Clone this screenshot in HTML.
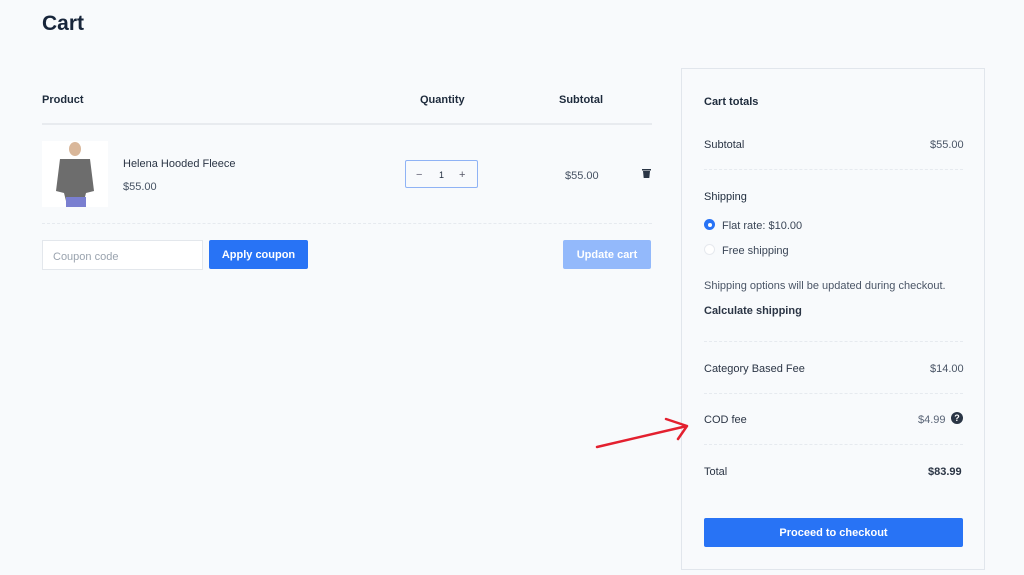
<!DOCTYPE html>
<html><head><meta charset="utf-8"><style>
*{margin:0;padding:0;box-sizing:border-box}
body{width:1024px;height:575px;background:#f8fafc;font-family:"Liberation Sans",sans-serif;color:#1e2b3c;position:relative;overflow:hidden;font-size:11px}
.a{position:absolute;white-space:nowrap;margin-top:2px}
svg.a{margin-top:0}
.b{font-weight:bold}
.hr{position:absolute;height:1px;border-top:1px dashed #e6eaef}
.btn{position:absolute;height:29px;border-radius:2px;color:#fff;font-weight:bold;text-align:center;line-height:31px}
</style></head><body>
<div class="a b" style="left:42px;top:10px;font-size:21px;color:#17253a">Cart</div>
<div class="a b" style="left:42px;top:92px;font-size:11px">Product</div>
<div class="a b" style="left:420px;top:92px">Quantity</div>
<div class="a b" style="left:559px;top:92px">Subtotal</div>
<div style="position:absolute;left:42px;top:123px;width:610px;height:2px;background:#e8ebef"></div>
<div style="position:absolute;left:42px;top:141px;width:66px;height:66px;background:#fff">
<svg width="66" height="66"><ellipse cx="33" cy="8" rx="6" ry="7" fill="#d9b79a"/><path d="M18 18 L48 18 L52 50 L44 52 L42 60 L24 60 L22 52 L14 50Z" fill="#6d6d6d"/><rect x="24" y="56" width="20" height="10" fill="#7a7fd0"/></svg></div>
<div class="a" style="left:123px;top:156px;font-size:11px;color:#2b3545">Helena Hooded Fleece</div>
<div class="a" style="left:123px;top:179px;color:#465263">$55.00</div>
<div style="position:absolute;left:405px;top:160px;width:73px;height:28px;border:1px solid #8fb3f5;border-radius:2px"></div>
<div class="a" style="left:416px;top:167px;color:#667">−</div>
<div class="a" style="left:439px;top:168px;font-size:9px">1</div>
<div class="a" style="left:459px;top:167px;color:#556">+</div>
<div class="a" style="left:565px;top:168px;color:#465263">$55.00</div>
<svg class="a" style="left:642px;top:168px" width="9" height="10"><rect x="0" y="1" width="9" height="1.5" fill="#2a3545"/><path d="M1 3 H8 L7.3 10 H1.7Z" fill="#2a3545"/></svg>
<div class="hr" style="left:42px;top:223px;width:610px"></div>
<div style="position:absolute;left:42px;top:240px;width:161px;height:30px;border:1px solid #e3e7ec;background:#fff"></div>
<div class="a" style="left:53px;top:249px;color:#9aa3ae">Coupon code</div>
<div class="btn" style="left:209px;top:240px;width:99px;background:#2873f5">Apply coupon</div>
<div class="btn" style="left:563px;top:240px;width:88px;background:#93b9fb">Update cart</div>
<div style="position:absolute;left:681px;top:68px;width:304px;height:502px;border:1px solid #e1e6ec"></div>
<div class="a b" style="left:704px;top:94px">Cart totals</div>
<div class="a" style="left:704px;top:137px;color:#2b3545">Subtotal</div>
<div class="a" style="left:930px;top:137px;color:#4a5566">$55.00</div>
<div class="hr" style="left:704px;top:169px;width:259px"></div>
<div class="a" style="left:704px;top:189px">Shipping</div>
<div style="position:absolute;left:704px;top:219px;width:11px;height:11px;border-radius:50%;background:#2873f5"><div style="position:absolute;left:3.5px;top:3.5px;width:4px;height:4px;border-radius:50%;background:#fff"></div></div>
<div class="a" style="left:722px;top:218px;color:#3a4556">Flat rate: $10.00</div>
<div style="position:absolute;left:704px;top:244px;width:11px;height:11px;border-radius:50%;border:1px solid #e6e9ee;background:#fff"></div>
<div class="a" style="left:722px;top:243px;color:#3a4556">Free shipping</div>
<div class="a" style="left:704px;top:278px;color:#4a5566">Shipping options will be updated during checkout.</div>
<div class="a b" style="left:704px;top:303px;color:#2b3545">Calculate shipping</div>
<div class="hr" style="left:704px;top:341px;width:259px"></div>
<div class="a" style="left:704px;top:361px;color:#2b3545">Category Based Fee</div>
<div class="a" style="left:930px;top:361px;color:#4a5566">$14.00</div>
<div class="hr" style="left:704px;top:393px;width:259px"></div>
<div class="a" style="left:704px;top:412px;color:#2b3545">COD fee</div>
<div class="a" style="left:918px;top:412px;color:#5a6577">$4.99</div>
<div style="position:absolute;left:951px;top:412px;width:12px;height:12px;border-radius:50%;background:#2a3545;color:#fff;font-size:9px;font-weight:bold;text-align:center;line-height:12px">?</div>
<div class="hr" style="left:704px;top:444px;width:259px"></div>
<div class="a" style="left:704px;top:464px;color:#2b3545">Total</div>
<div class="a b" style="left:928px;top:464px;color:#2b3545">$83.99</div>
<div class="btn" style="left:704px;top:518px;width:259px;background:#2873f5">Proceed to checkout</div>
<svg class="a" style="left:590px;top:415px" width="110" height="40"><path d="M7 32 L97 11 M76 4 L97 11 L88 24" stroke="#e3202f" stroke-width="2.5" fill="none" stroke-linecap="round" stroke-linejoin="round"/></svg>
</body></html>
